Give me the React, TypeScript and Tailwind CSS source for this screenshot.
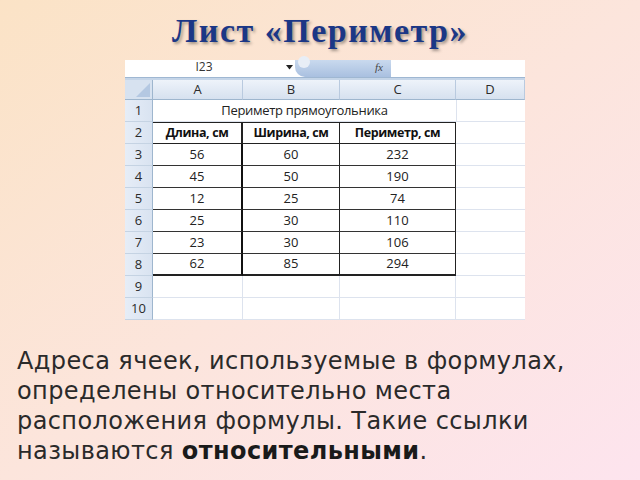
import React from "react";

const cols = [
  { label: "A", w: "w-[90px]" },
  { label: "B", w: "w-[97px]" },
  { label: "C", w: "w-[116px]" },
  { label: "D", w: "w-[69px]" },
];

const data: [string, string, string][] = [
  ["56", "60", "232"],
  ["45", "50", "190"],
  ["12", "25", "74"],
  ["25", "30", "110"],
  ["23", "30", "106"],
  ["62", "85", "294"],
];

const cellFont = { fontFamily: '"Open Sans", "Noto Sans", sans-serif' };

function RowHead({ n }: { n: number }) {
  return (
    <div className="w-[28px] h-full flex items-center justify-center bg-gradient-to-r from-[#e6edf7] to-[#d9e3f1] border-r border-[#9eb6ce] border-b border-b-[#c5d3e3] text-[13px] text-[#2b2b2b]">
      {n}
    </div>
  );
}

export default function App() {
  return (
    <div className="w-[640px] h-[480px] overflow-hidden bg-gradient-to-br from-[#fbe3c6] via-[#fce5dc] to-[#fde4ee] flex flex-col">
      <div className="h-[60px] flex items-center justify-center pt-[2px]">
        <h1
          className="text-[34px] font-bold tracking-[1.5px] text-[#1b3786] leading-none"
          style={{ fontFamily: '"Liberation Serif", serif', textShadow: "2px 2px 3px rgba(0,0,0,0.35)" }}
        >
          Лист «Периметр»
        </h1>
      </div>

      <div className="ml-[125px] w-[400px] flex flex-col bg-white" style={cellFont}>
        {/* formula bar */}
        <div className="h-[17px] flex items-stretch bg-white">
          <div className="w-[158px] flex items-center justify-center text-[12px] text-[#333] leading-none pb-[3px]">
            I23
          </div>
          <div className="w-[12px] flex items-center justify-center pb-[3px]">
            <svg width="7" height="5" viewBox="0 0 7 5"><path d="M0 0h7L3.5 4.5z" fill="#222" /></svg>
          </div>
          <div className="w-[96px] rounded-bl-[10px] bg-gradient-to-b from-[#c9d9ee] to-[#a9c0e0] flex items-center justify-end pr-[8px] relative">
            <div className="absolute left-[3px] top-[-4px] w-[12px] h-[12px] rounded-full bg-[#e8eef6]" />
            <span className="italic text-[11px] text-[#444] leading-none pb-[3px]" style={{ fontFamily: '"Liberation Serif", serif' }}>fx</span>
          </div>
          <div className="flex-1 bg-white" />
        </div>
        <div className="h-[3px] bg-[#c5d5e8] border-t border-[#9fb7d2]" />

        {/* column headers */}
        <div className="h-[20px] flex">
          <div className="w-[28px] h-full bg-[#d7e2f0] border-r border-[#9eb6ce] border-b border-b-[#9eb6ce] flex items-end justify-end p-[2px]">
            <svg width="14" height="14" viewBox="0 0 14 14"><path d="M14 0v14H0z" fill="#b4c8e2" /></svg>
          </div>
          {cols.map((c) => (
            <div
              key={c.label}
              className={`${c.w} h-full flex items-center justify-center bg-gradient-to-b from-[#eef3fa] to-[#d6e1ef] border-r border-[#b9cadf] border-b border-b-[#9eb6ce] text-[13px] text-[#2b2b2b]`}
            >
              {c.label}
            </div>
          ))}
        </div>

        {/* row 1 */}
        <div className="h-[22px] flex">
          <RowHead n={1} />
          <div className="w-[303px] flex items-center justify-center text-[13px] text-[#222] border-b border-[#dde3ee] tracking-[-0.3px]">
            Периметр прямоугольника
          </div>
          <div className="w-[69px] border-l border-[#dde3ee] border-b border-[#dde3ee]" />
        </div>

        {/* row 2 header */}
        <div className="h-[22px] flex">
          <RowHead n={2} />
          <div className="w-[90px] flex items-center justify-center text-[12.5px] font-bold text-[#111] border-t-[1.5px] border-b-[1.5px] border-r-[2px] border-[#222] tracking-[-0.4px]">
            Длина, см
          </div>
          <div className="w-[97px] flex items-center justify-center text-[12.5px] font-bold text-[#111] border-t-[1.5px] border-b-[1.5px] border-r-[1.5px] border-[#222] tracking-[-0.4px]">
            Ширина, см
          </div>
          <div className="w-[116px] flex items-center justify-center text-[12.5px] font-bold text-[#111] border-t-[1.5px] border-b-[1.5px] border-r-[1.5px] border-[#222] tracking-[-0.4px]">
            Периметр, см
          </div>
          <div className="w-[69px] border-b border-[#dde3ee]" />
        </div>

        {data.map((r, i) => {
          const last = i === data.length - 1;
          const bb = last ? "border-b-[2px] border-b-[#222]" : "border-b-[1.5px] border-b-[#333]";
          return (
            <div key={i} className="h-[22px] flex">
              <RowHead n={i + 3} />
              <div className={`w-[90px] flex items-center justify-center text-[13px] text-[#222] border-r-[2px] border-r-[#111] ${bb}`}>
                {r[0]}
              </div>
              <div className={`w-[97px] flex items-center justify-center text-[13px] text-[#222] border-r-[1.5px] border-r-[#222] ${bb}`}>
                {r[1]}
              </div>
              <div className={`w-[116px] flex items-center justify-center text-[13px] text-[#222] border-r-[1.5px] border-r-[#222] ${bb}`}>
                {r[2]}
              </div>
              <div className="w-[69px] border-b border-[#dde3ee]" />
            </div>
          );
        })}

        {[9, 10].map((n) => (
          <div key={n} className="h-[22px] flex">
            <RowHead n={n} />
            <div className="w-[90px] border-r border-[#dde3ee] border-b border-b-[#dde3ee]" />
            <div className="w-[97px] border-r border-[#dde3ee] border-b border-b-[#dde3ee]" />
            <div className="w-[116px] border-r border-[#dde3ee] border-b border-b-[#dde3ee]" />
            <div className="w-[69px] border-b border-[#dde3ee]" />
          </div>
        ))}
      </div>

      <p
        className="mt-[26px] ml-[17px] mr-[20px] text-[24px] leading-[30px] tracking-[0.4px] text-[#2a2a2a]"
        style={{ fontFamily: '"DejaVu Sans", sans-serif' }}
      >
        Адреса ячеек, используемые в формулах, определены относительно места расположения формулы. Такие ссылки называются{" "}
        <b className="font-bold text-[#1a1a1a]">относительными</b>.
      </p>
    </div>
  );
}
